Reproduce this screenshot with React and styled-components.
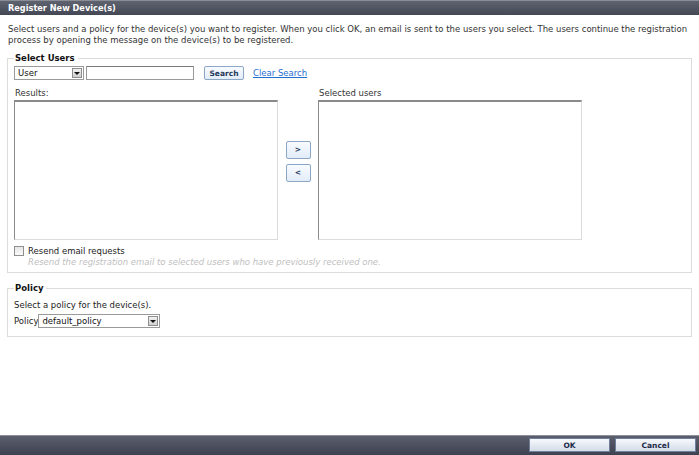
import React from "react";
import styled, { createGlobalStyle } from "styled-components";

const GlobalStyle = createGlobalStyle`
  html, body {
    margin: 0;
    padding: 0;
    background: #fff;
  }
  body {
    font-family: "DejaVu Sans", sans-serif;
    font-size: 8.5px;
    color: #333;
  }
`;

const Page = styled.div`
  width: 699px;
  height: 455px;
  display: flex;
  flex-direction: column;
`;

const TitleBar = styled.div`
  height: 15px;
  flex-shrink: 0;
  display: flex;
  align-items: center;
  padding-left: 8px;
  background: linear-gradient(#8a8d96 0, #8a8d96 1px, #5f6370 1px, #444855 100%);
  color: #fff;
  font-weight: bold;
  font-size: 8.2px;
`;

const Content = styled.div`
  flex: 1;
  padding: 9px 7px 0 7px;
`;

const Intro = styled.p`
  margin: 0 0 7px 1px;
  line-height: 11px;
`;

const Group = styled.fieldset`
  margin: 0 0 ${(p) => p.$gap || 0}px 0;
  padding: 3px 6px 0 6px;
  border: 1px solid #dcdcdc;
  height: ${(p) => p.$h}px;
  box-sizing: border-box;
  min-width: 0;
`;

const Legend = styled.legend`
  padding: 0 3px 0 1px;
  font-weight: bold;
  color: #111;
  font-size: 8.5px;
`;

const SearchRow = styled.div`
  display: flex;
  align-items: center;
  height: 14px;
`;

const Select = styled.div`
  box-sizing: border-box;
  width: ${(p) => p.$w}px;
  height: 14px;
  border: 1px solid #9a9a9a;
  display: flex;
  align-items: center;
  justify-content: space-between;
  padding-left: 3px;
  background: #fff;
  color: #111;
`;

const Arrow = styled.span`
  width: 10px;
  height: 10px;
  margin-right: 1px;
  box-sizing: border-box;
  border: 1px solid #8e8e8e;
  background: linear-gradient(#f2f2f2, #cfcfcf);
  display: flex;
  align-items: center;
  justify-content: center;
  &::after {
    content: "";
    border-left: 3px solid transparent;
    border-right: 3px solid transparent;
    border-top: 3px solid #111;
  }
`;

const TextInput = styled.div`
  box-sizing: border-box;
  width: 108px;
  height: 14px;
  margin-left: 2px;
  border: 1px solid #9a9a9a;
  border-top-color: #7a7a7a;
`;

const SmallButton = styled.button`
  box-sizing: border-box;
  font-family: inherit;
  font-size: 7.5px;
  font-weight: bold;
  color: #1d3557;
  height: ${(p) => p.$h || 14}px;
  width: ${(p) => p.$w}px;
  padding: 0;
  border: 1px solid #8ca6c6;
  border-radius: 2px;
  background: linear-gradient(#f8fbff, #e2ecf8);
  display: flex;
  align-items: center;
  justify-content: center;
  margin-left: ${(p) => p.$ml || 0}px;
`;

const Link = styled.a`
  margin-left: 9px;
  color: #1f6fd1;
  text-decoration: underline;
`;

const Pickers = styled.div`
  display: grid;
  grid-template-columns: 264px 40px 264px;
  grid-template-rows: 12px 140px;
  row-gap: 1px;
  margin-top: 7px;
`;

const Label = styled.div`
  padding-left: 1px;
  line-height: 12px;
  color: #333;
`;

const ListBox = styled.div`
  box-sizing: border-box;
  border: 1px solid #dcdcdc;
  border-top: 2px solid #8a8a8a;
  border-left: 1px solid #8a8a8a;
  background: #fff;
`;

const MoveColumn = styled.div`
  grid-row: 2;
  grid-column: 2;
  display: flex;
  flex-direction: column;
  align-items: center;
  justify-content: center;
  gap: 5px;
  padding-bottom: 18px;
`;

const CheckRow = styled.label`
  display: flex;
  align-items: center;
  gap: 4px;
  margin-top: 5px;
  height: 11px;
  color: #222;
`;

const Box = styled.span`
  width: 10px;
  height: 10px;
  box-sizing: border-box;
  border: 1px solid #8f8f8f;
  background: linear-gradient(#e6e6e6, #fbfbfb);
`;

const Hint = styled.div`
  margin: 1px 0 0 14px;
  font-style: italic;
  color: #c0c0c0;
  line-height: 11px;
`;

const Note = styled.div`
  margin-top: 3px;
  line-height: 12px;
  color: #222;
`;

const PolicyRow = styled.div`
  display: flex;
  align-items: center;
  margin-top: 3px;
  color: #222;
`;

const Footer = styled.div`
  height: 20px;
  flex-shrink: 0;
  display: flex;
  align-items: center;
  justify-content: flex-end;
  gap: 5px;
  padding-right: 3px;
  background: linear-gradient(#8d9098 0, #8d9098 1px, #5b5f6d 1px, #3d4150 100%);
`;

const DialogButton = styled.button`
  box-sizing: border-box;
  width: 81px;
  height: 14px;
  padding: 0;
  font-family: inherit;
  font-size: 7.5px;
  font-weight: bold;
  color: #1b2b48;
  border: 1px solid #6f7f99;
  background: linear-gradient(#f7f9fc, #d3dce8);
`;

export default function App() {
  return (
    <Page>
      <GlobalStyle />
      <TitleBar>Register New Device(s)</TitleBar>
      <Content>
        <Intro>
          Select users and a policy for the device(s) you want to register. When you click OK, an
          email is sent to the users you select. The users continue the registration process by
          opening the message on the device(s) to be registered.
        </Intro>
        <Group $h={220} $gap={10}>
          <Legend>Select Users</Legend>
          <SearchRow>
            <Select $w={70}>
              User
              <Arrow />
            </Select>
            <TextInput />
            <SmallButton $w={40} $ml={10}>
              Search
            </SmallButton>
            <Link href="#">Clear Search</Link>
          </SearchRow>
          <Pickers>
            <Label>Results:</Label>
            <div />
            <Label>Selected users</Label>
            <ListBox />
            <MoveColumn>
              <SmallButton $w={25} $h={18}>&gt;</SmallButton>
              <SmallButton $w={25} $h={18}>&lt;</SmallButton>
            </MoveColumn>
            <ListBox />
          </Pickers>
          <CheckRow>
            <Box />
            Resend email requests
          </CheckRow>
          <Hint>
            Resend the registration email to selected users who have previously received one.
          </Hint>
        </Group>
        <Group $h={54}>
          <Legend>Policy</Legend>
          <Note>Select a policy for the device(s).</Note>
          <PolicyRow>
            Policy
            <Select $w={122}>
              default_policy
              <Arrow />
            </Select>
          </PolicyRow>
        </Group>
      </Content>
      <Footer>
        <DialogButton>OK</DialogButton>
        <DialogButton>Cancel</DialogButton>
      </Footer>
    </Page>
  );
}
